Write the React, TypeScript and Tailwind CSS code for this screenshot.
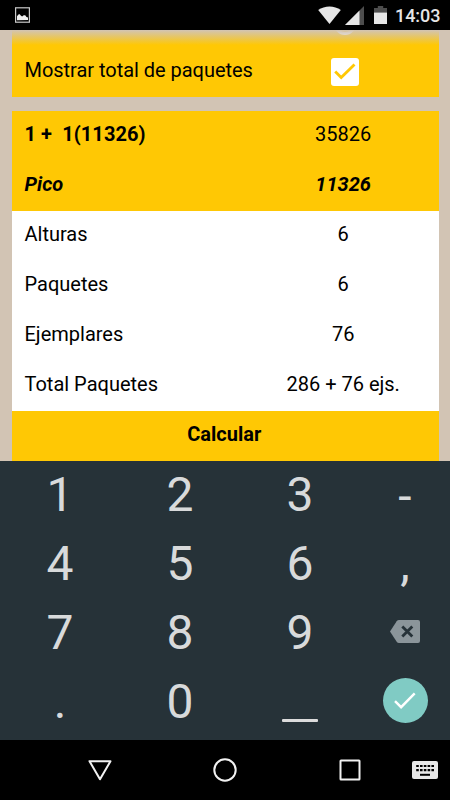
import clsx from "clsx";

interface ResultRow {
  label: string;
  value: string;
  highlighted?: boolean;
  labelClass?: string;
  valueClass?: string;
}

const rows: ResultRow[] = [
  {
    label: "1 +  1(11326)",
    value: "35826",
    highlighted: true,
    labelClass: "font-bold tracking-[0.08px]",
  },
  {
    label: "Pico",
    value: "11326",
    highlighted: true,
    labelClass: "font-bold italic",
    valueClass: "font-bold italic",
  },
  { label: "Alturas", value: "6" },
  { label: "Paquetes", value: "6" },
  { label: "Ejemplares", value: "76" },
  { label: "Total Paquetes", value: "286 + 76 ejs." },
];

const keys = ["1", "2", "3", "-", "4", "5", "6", ",", "7", "8", "9", "backspace", ".", "0", "_", "done"];

function StatusBar() {
  return (
    <header className="relative z-10 flex h-[30px] shrink-0 items-center bg-black text-[#e6e6e6]">
      <svg className="ml-[15px] h-4 w-[15px]" viewBox="0 0 15 16">
        <rect x="0.6" y="0.8" width="13.8" height="14.4" fill="none" stroke="#c9c9c9" strokeWidth="1.2" />
        <path d="M2 13.2V9.2l1-1.2.8-.8h1l.9 1.2 1.4 1 1.6-1.200h1.5l1.3 1.8 1.500.6v2.400z" fill="#f0f0f0" />
      </svg>
      <svg className="ml-auto h-[18px] w-[23px]" viewBox="0 0 23 18" fill="#e6e6e6">
        <path d="M0.2 4.1C6.6-.7 16.4-.7 22.8 4.1L11.5 18z" />
      </svg>
      <svg className="ml-1 h-[19px] w-[19px]" viewBox="0 0 19 19">
        <path d="M19 0v19H0z" fill="#4d4d4d" />
        <path d="M14.5 4.5V19H0z" fill="#e6e6e6" />
      </svg>
      <svg className="ml-[10px] h-[18px] w-[13px]" viewBox="0 0 13 18">
        <path d="M3.8 0h5.4v2H13v5H0V2h3.8z" fill="#4d4d4d" />
        <path d="M0 6.6h13V18H0z" fill="#e6e6e6" />
      </svg>
      <span className="mr-[9px] ml-[8px] w-[46px] text-[18px] leading-[31px] font-medium tracking-[-0.05px]">
        14:03
      </span>
    </header>
  );
}

function Key({ value }: { value: string }) {
  if (value === "backspace") {
    return (
      <button className="flex items-center justify-center pb-[3px]" aria-label="Borrar">
        <svg className="h-[23px] w-[30px]" viewBox="0 0 30 23">
          <path
            d="M9 0h19a2 2 0 0 1 2 2v19a2 2 0 0 1-2 2H9a3 3 0 0 1-2.3-1.2L0 11.5 6.700 1.200A3 3 0 0 1 9 0z"
            fill="#8b959a"
          />
          <path d="M12.3 6.5l10 10M22.3 6.5l-10 10" stroke="#263238" strokeWidth="2.8" />
        </svg>
      </button>
    );
  }

  if (value === "done") {
    return (
      <button className="flex items-center justify-center pb-[2px]" aria-label="Listo">
        <span className="flex size-[45px] items-center justify-center rounded-full bg-[#80cbc4]">
          <svg className="h-[17px] w-[22px]" viewBox="0 0 22 17">
            <path d="M1 9.2l6.1 6L20.7 1.4" fill="none" stroke="#fff" strokeWidth="2.4" />
          </svg>
        </span>
      </button>
    );
  }

  if (value === "_") {
    return (
      <button className="flex items-end justify-center pb-[14px]" aria-label="Espacio">
        <span className="h-[3px] w-9 rounded-[1px] bg-[#dcdcdc]" />
      </button>
    );
  }

  return (
    <button
      className={clsx(
        "flex items-center justify-center text-[48px] leading-none text-[#d8dadb]",
        value === "-" && "pt-[3px]",
      )}
    >
      {value}
    </button>
  );
}

function NavigationBar() {
  return (
    <nav className="grid h-[60px] shrink-0 grid-cols-[37px_125px_125px_125px_38px] items-center bg-black">
      <span />
      <svg className="h-[23px] w-6 justify-self-center" viewBox="0 0 24 23">
        <path d="M1.5 2.2h21L12 20.2z" fill="none" stroke="#f2f2f2" strokeWidth="2" strokeLinejoin="round" />
      </svg>
      <svg className="size-6 justify-self-center" viewBox="0 0 24 24">
        <circle cx="12" cy="12" r="10.7" fill="none" stroke="#f2f2f2" strokeWidth="2" />
      </svg>
      <svg className="size-[22px] justify-self-center" viewBox="0 0 22 22">
        <rect x="1.5" y="1.5" width="19" height="19" rx="0.5" fill="none" stroke="#f2f2f2" strokeWidth="2" />
      </svg>
      <svg className="h-[18px] w-[26px]" viewBox="0 0 26 18">
        <rect width="26" height="18" rx="2" fill="#e8e8e8" />
        <path d="M4.2 5h18M4.2 9.2h18" stroke="#000" strokeWidth="2.2" strokeDasharray="2.6 1.2" />
        <path d="M8 13.8h10" stroke="#000" strokeWidth="2" />
      </svg>
    </nav>
  );
}

export default function App() {
  return (
    <div className="flex h-[800px] w-[450px] flex-col overflow-hidden bg-[#d2c4b4] font-['Roboto',sans-serif] text-black">
      <StatusBar />

      <main className="relative flex h-[431px] shrink-0 flex-col gap-[14px] overflow-hidden px-[11.5px] text-[20px] leading-[50px]">
        <section className="relative flex h-[67px] shrink-0 items-end bg-[#ffc804] pb-[2px]">
          <span className="w-[55%] pl-[13px] tracking-[-0.03px] whitespace-nowrap">Mostrar total de paquetes</span>
          <span className="flex h-[50px] w-[45%] items-center justify-center pt-[3px] pl-[6px]">
            <span className="flex size-7 items-center justify-center rounded-[3px] bg-white">
              <svg className="h-[17px] w-[22px]" viewBox="0 0 22 17">
                <path d="M1.2 8.5l6 6L20.5 1.5" fill="none" stroke="#ffc804" strokeWidth="2.8" />
              </svg>
            </span>
          </span>
          {/* Lower edge of the option that has scrolled under the status bar */}
          <span className="absolute -top-[17px] left-[322.5px] size-[22px] rounded-full border-[3px] border-white" />
        </section>

        <section className="shrink-0 bg-white">
          {rows.map((row) => (
            <div key={row.label} className={clsx("flex h-[50px]", row.highlighted && "bg-[#ffc804]")}>
              <span className={clsx("-mt-[2.5px] w-[55%] pl-[13px] whitespace-pre", row.labelClass)}>
                {row.label}
              </span>
              <span className={clsx("-mt-[2.5px] w-[45%] pl-[1.5px] text-center", row.valueClass)}>
                {row.value}
              </span>
            </div>
          ))}
          <button className="block h-[50px] w-full bg-[#ffc804] pr-[1.5px] pb-1 text-center leading-[46px] font-bold">
            Calcular
          </button>
        </section>

        {/* Scroll fade */}
        <div className="absolute inset-x-0 top-0 h-[15px] bg-linear-to-b from-[#d2c4b4] to-[#d2c4b4]/0" />
      </main>

      <div className="grid h-[279px] shrink-0 grid-cols-[120px_120px_120px_90px] grid-rows-[repeat(4,68.75px)] bg-[#263238]">
        {keys.map((key) => (
          <Key key={key} value={key} />
        ))}
      </div>

      <NavigationBar />
    </div>
  );
}
